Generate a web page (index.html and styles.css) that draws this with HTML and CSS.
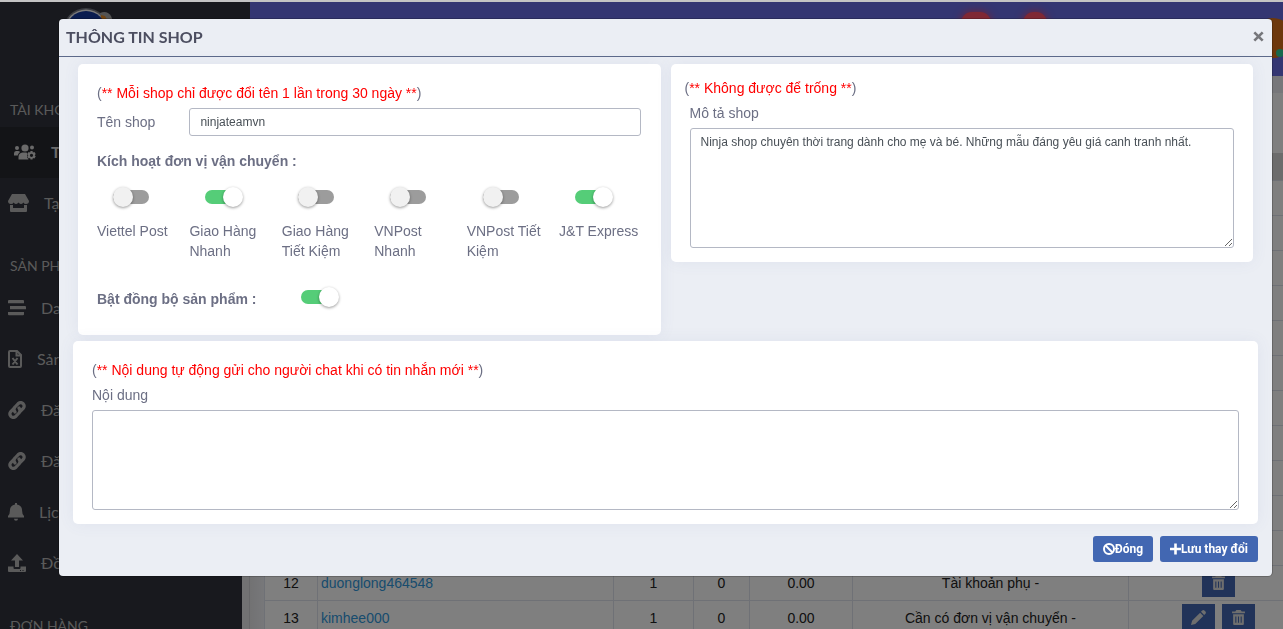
FILE: index.html
```html
<!DOCTYPE html>
<html lang="vi">
<head>
<meta charset="utf-8">
<title>Thông tin shop</title>
<link rel="stylesheet" href="styles.css">
</head>
<body>
<div class="page">
  <aside class="sidebar">
    <div class="brand">
      <svg width="60" height="60" viewBox="0 0 60 60" aria-hidden="true">
        <circle cx="26" cy="23" r="23" fill="#b9c0cc" opacity=".5"/>
        <circle cx="26" cy="23" r="21.500" fill="#f4f4f4"/>
        <path d="M40 5q7-3 11 3l3 8-12 2z" fill="#a8a8a8"/>
        <path d="M41 7l4 1 4 7-8-2z" fill="#e08a28"/>
        <circle cx="26" cy="23" r="20" fill="#1238a0"/>
      </svg>
    </div>
    <h2 class="side-title">TÀI KHOẢN</h2>
    <ul class="side-list">
      <li><a class="side-link active" href="#">
        <svg width="22" height="16" viewBox="0 0 22 16"><g fill="currentColor"><circle cx="3" cy="4" r="2"/><circle cx="11" cy="4" r="3.600"/><circle cx="18" cy="3.500" r="2"/><path d="M0 9.500Q0 7 2 7h2q1.500 0 2 1-2 1.500-2.300 3.500H0zM4.500 15.500V13q0-4 4-4.500h4l1 1.500-.5 3 1.500 2.500z"/><path fill-rule="evenodd" d="M16.500 7h2l.4 1.500 1.500-.4 1.300 2-1 1.200 1 1.200-1.300 2-1.500-.4-.4 1.500h-2l-.4-1.500-1.500.4-1.300-2 1-1.200-1-1.200 1.300-2 1.500.4zm1 2.700a1.500 1.500 0 100 3.200 1.500 1.500 0 000-3.200z"/></g></svg>
        <span>Tổng quan</span></a></li>
      <li><a class="side-link" href="#">
        <svg width="21" height="18" viewBox="0 0 21 18"><path fill="currentColor" d="M4 0h13l4 7q0 3-3 3-2 0-2.500-1.500Q14 10 13 10t-2.500-1.500Q9 10 8 10T5.500 8.500Q5 10 3 10 0 10 0 7zM2 11h3v3h11v-3h3v6q0 1-1 1H3q-1 0-1-1z"/></svg>
        <span>Tạo tài khoản</span></a></li>
    </ul>
    <h2 class="side-title">SẢN PHẨM</h2>
    <ul class="side-list">
      <li><a class="side-link" href="#">
        <svg width="18" height="16" viewBox="0 0 18 16"><path fill="currentColor" d="M1 0h14q1 0 1 1v2.300H0V1q0-1 1-1zM2 6h15q1 0 1 1v2.300H2V7zM0 12h16v2.300q0 1-1 1H1q-1 0-1-1z"/></svg>
        <span>Danh sách</span></a></li>
      <li><a class="side-link" href="#">
        <svg width="14" height="18" viewBox="0 0 14 18"><path fill="none" stroke="currentColor" stroke-width="2" d="M1 2q0-1 1-1h7l4 4v11q0 1-1 1H2q-1 0-1-1zM8.500 1v4.500H13M4.500 8l5 6.500M9.500 8l-5 6.500"/></svg>
        <span>Sản phẩm</span></a></li>
      <li><a class="side-link" href="#">
        <svg width="18" height="18" viewBox="0 0 18 18"><g fill="none" stroke="currentColor" stroke-width="3.200" stroke-linecap="round"><path d="M7 11q-2-3 0-5l3-3.200q2.500-2.300 5-.3 2.200 2.500.2 5L13 9.700"/><path d="M11 7q2 3 0 5l-3 3.200q-2.500 2.300-5 .3-2.200-2.500-.2-5L5 8.300"/></g></svg>
        <span>Đăng</span></a></li>
      <li><a class="side-link" href="#">
        <svg width="18" height="18" viewBox="0 0 18 18"><g fill="none" stroke="currentColor" stroke-width="3.200" stroke-linecap="round"><path d="M7 11q-2-3 0-5l3-3.200q2.500-2.300 5-.3 2.200 2.500.2 5L13 9.700"/><path d="M11 7q2 3 0 5l-3 3.200q-2.500 2.300-5 .3-2.200-2.500-.2-5L5 8.300"/></g></svg>
        <span>Đăng</span></a></li>
      <li><a class="side-link" href="#">
        <svg width="16" height="18" viewBox="0 0 16 18"><path fill="currentColor" d="M7 0h2v1.500q5 1 5 5.500 0 4 2 6v1.500H0V13q2-2 2-6 0-4.500 5-5.500zM6 15.700h4q0 2-2 2t-2-2z"/></svg>
        <span>Lịch</span></a></li>
      <li><a class="side-link" href="#">
        <svg width="18" height="18" viewBox="0 0 18 18"><path fill="currentColor" fill-rule="evenodd" d="M9 0l6 6.500h-4V13H7V6.500H3zM0 12.500h5.500V14q0 1 1 1h5q1 0 1-1v-1.500H18V17q0 1-1 1H1q-1 0-1-1zM12 16v1h1v-1zm2.500 0v1h1v-1z"/></svg>
        <span>Đồng bộ</span></a></li>
    </ul>
    <h2 class="side-title">ĐƠN HÀNG</h2>
  </aside>

  <div class="content">
    <header class="topbar">
      <span class="badge badge-wide"></span>
      <span class="badge badge-small"></span>
      <span class="avatar"></span>
      <span class="online"></span>
    </header>
    <div class="crumbs"></div>
    <main class="panel">
      <table class="shops">
        <colgroup><col class="c-no"><col class="c-name"><col class="c-a"><col class="c-b"><col class="c-c"><col class="c-note"><col class="c-act"></colgroup>
        <thead><tr><th colspan="7"></th></tr></thead>
        <tbody>
          <tr><td colspan="7"></td></tr><tr><td colspan="7"></td></tr><tr><td colspan="7"></td></tr>
          <tr><td colspan="7"></td></tr><tr><td colspan="7"></td></tr><tr><td colspan="7"></td></tr>
          <tr><td colspan="7"></td></tr><tr><td colspan="7"></td></tr><tr><td colspan="7"></td></tr>
          <tr><td colspan="7"></td></tr><tr><td colspan="7"></td></tr>
          <tr><td>12</td><td class="name"><a href="#">duonglong464548</a></td><td>1</td><td>0</td><td>0.00</td><td>Tài khoản phụ -</td>
            <td><div class="actions"><button class="tool" type="button" aria-label="Xóa"><svg width="13" height="15" viewBox="0 0 12 14"><path fill="currentColor" fill-rule="evenodd" d="M4 0h4l1 1.500h3V3H0V1.500h3zM1 4h10v9q0 1-1 1H2q-1 0-1-1zM3 6v6h1V6zm2.500 0v6h1V6zM8 6v6h1V6z"/></svg></button></div></td></tr>
          <tr><td>13</td><td class="name"><a href="#">kimhee000</a></td><td>1</td><td>0</td><td>0.00</td><td>Cần có đơn vị vận chuyển -</td>
            <td><div class="actions"><button class="tool" type="button" aria-label="Sửa"><svg width="15" height="15" viewBox="0 0 14 14"><path fill="currentColor" d="M10.500.5q1-.8 2 0l1 1q.8 1 0 2L12.300 4.700 9.300 1.700zM8.500 2.500l3 3L4 13l-4 1 1-4z"/></svg></button><button class="tool" type="button" aria-label="Xóa"><svg width="13" height="15" viewBox="0 0 12 14"><path fill="currentColor" fill-rule="evenodd" d="M4 0h4l1 1.500h3V3H0V1.500h3zM1 4h10v9q0 1-1 1H2q-1 0-1-1zM3 6v6h1V6zm2.500 0v6h1V6zM8 6v6h1V6z"/></svg></button></div></td></tr>
        </tbody>
      </table>
    </main>
  </div>
</div>

<div class="backdrop">
  <form class="modal" role="dialog" aria-labelledby="modal-title">
    <div class="modal-head">
      <h1 id="modal-title">THÔNG TIN SHOP</h1>
      <button class="close" type="button" aria-label="Close"><svg width="11" height="11" viewBox="0 0 10 10"><path d="M1.200 1.200l7.600 7.600M8.800 1.200L1.200 8.800" stroke="currentColor" stroke-width="2.400"/></svg></button>
    </div>
    <div class="modal-body">
      <div class="top-cards">
        <section class="card card-shop">
          <p class="note">(<span>** Mỗi shop chỉ được đổi tên 1 lần trong 30 ngày **</span>)</p>
          <div class="grid name-row">
            <label for="shop-name">Tên shop</label>
            <input id="shop-name" class="field" type="text" value="ninjateamvn">
          </div>
          <h3 class="sub">Kích hoạt đơn vị vận chuyển :</h3>
          <div class="grid carriers">
            <label><input class="switch" type="checkbox"><span>Viettel Post</span></label>
            <label><input class="switch" type="checkbox" checked><span>Giao Hàng Nhanh</span></label>
            <label><input class="switch" type="checkbox"><span>Giao Hàng Tiết Kiệm</span></label>
            <label><input class="switch" type="checkbox"><span>VNPost Nhanh</span></label>
            <label><input class="switch" type="checkbox"><span>VNPost Tiết Kiệm</span></label>
            <label><input class="switch" type="checkbox" checked><span>J&amp;T Express</span></label>
          </div>
          <div class="sync">
            <label for="sync">Bật đồng bộ sản phẩm :</label>
            <input id="sync" class="switch" type="checkbox" checked>
          </div>
        </section>
        <section class="card card-desc">
          <p class="note">(<span>** Không được để trống **</span>)</p>
          <div class="stack inset">
            <label for="desc">Mô tả shop</label>
            <textarea id="desc" class="field area-tall">Ninja shop chuyên thời trang dành cho mẹ và bé. Những mẫu đáng yêu giá canh tranh nhất.</textarea>
          </div>
        </section>
      </div>
      <section class="card card-reply">
        <p class="note">(<span>** Nội dung tự động gửi cho người chat khi có tin nhắn mới **</span>)</p>
        <div class="stack">
          <label for="reply">Nội dung</label>
          <textarea id="reply" class="field area-short"></textarea>
        </div>
      </section>
    </div>
    <div class="modal-foot">
      <button class="btn" type="button"><svg width="12" height="12" viewBox="0 0 12 12"><g fill="none" stroke="currentColor" stroke-width="2"><circle cx="6" cy="6" r="5"/><path d="M2.500 2.500l7 7"/></g></svg>Đóng</button>
      <button class="btn" type="button"><svg width="11" height="12" viewBox="0 0 11 12"><path d="M5.500 .5v11M0 6h11" stroke="currentColor" stroke-width="2.600"/></svg>Lưu thay đổi</button>
    </div>
  </form>
</div>
</body>
</html>
```
FILE: styles.css
```css
* { box-sizing: border-box; }

body {
  margin: 0;
  height: 100vh;
  overflow: hidden;
  color: #6c6f84;
  font: 14px/20px "Liberation Sans", Arial, sans-serif;
}

h1, h2, h3, p, ul { margin: 0; padding: 0; }
ul { list-style: none; }
button, input, textarea { font-family: inherit; margin: 0; }
svg { display: block; flex: none; }

/* Page behind the dialog */
.page {
  display: flex;
  height: 100%;
  overflow: hidden;
  padding-top: 2px;
}

.sidebar {
  position: relative;
  z-index: 1;
  flex: none;
  width: 242px;
  background: #30323c;
  color: #b5b5b5;
  font-family: Lato, "Noto Sans", sans-serif;
}

.brand {
  width: 250px;
  height: 71px;
  padding: 6px 0 0 60px;
  background: #30323c;
}

.side-title {
  height: 54px;
  padding: 27px 10px 7px;
  font-size: 14px;
  font-weight: 400;
  line-height: 20px;
}

.side-link {
  display: flex;
  align-items: center;
  gap: 15px;
  height: 51px;
  padding: 0 0 2px 8px;
  color: #b5b5b5;
  font-size: 16px;
  text-decoration: none;
  white-space: nowrap;
}

.side-link.active {
  padding-left: 14px;
  background: #26282e;
  color: #d4d4d4;
  font-weight: 700;
}

.content {
  flex: 1;
  min-width: 0;
  display: flex;
  flex-direction: column;
  background: #e4e4e6;
  overflow: hidden;
}

.topbar {
  position: relative;
  flex: none;
  height: 74px;
  background: #686ce4;
}

.badge {
  position: absolute;
  top: 10px;
  height: 22px;
  border-radius: 11px;
  background: #ff5068;
  box-shadow: 0 0 8px #f04060;
}
.badge-wide { right: 292px; width: 30px; }
.badge-small { right: 236px; width: 24px; }

.avatar {
  position: absolute;
  top: 16px;
  right: -10px;
  width: 40px;
  height: 40px;
  border-radius: 50%;
  background: #da7018;
}
.online {
  position: absolute;
  top: 47px;
  right: -1px;
  width: 8px;
  height: 8px;
  border-radius: 50%;
  background: #30d098;
}

.crumbs {
  flex: none;
  height: 17px;
  background: #eeeef4;
}

.panel {
  flex: 1;
  min-height: 0;
  margin-left: 7px;
  padding: 60px 0 0 14px;
  border-left: 1px solid #d0d0d4;
  background: linear-gradient(90deg, #e4e4e6, #f0f1f6 15px, #fff 15px);
}

.shops {
  table-layout: fixed;
  width: 1044px;
  border-collapse: collapse;
  background: #fff;
  color: #222;
}
.shops th { height: 27px; padding: 0; background: #d8d8d8; }
.shops td {
  height: 35px;
  padding: 0 3px;
  border: 1px solid #dee2ec;
  text-align: center;
}
.shops .name { text-align: left; }
.shops a { color: #3098dc; text-decoration: none; }
.c-no { width: 53px; }
.c-name { width: 296px; }
.c-a { width: 80px; }
.c-b { width: 56px; }
.c-c { width: 103px; }
.c-note { width: 276px; }
.c-act { width: 180px; }

.actions { display: flex; justify-content: center; gap: 7px; }
.tool {
  display: grid;
  place-items: center;
  width: 33px;
  height: 28px;
  padding: 0;
  border: 0;
  background: #4267b2;
  color: #dcdcdc;
}

/* Dialog */
.backdrop {
  position: fixed;
  z-index: 2;
  inset: 0;
  padding: 17px 11px 0 59px;
  border-top: 2px solid #c4c4c4;
  background: rgba(0, 0, 0, .5);
  background-clip: padding-box;
}

.modal {
  border-radius: 4px;
  background: #ebeef4;
  box-shadow: 0 0 0 1px rgba(0, 0, 0, .2);
}

.modal-head {
  display: flex;
  align-items: center;
  justify-content: space-between;
  height: 38px;
  padding: 0 8px 2px 7px;
  border-bottom: 1px solid #5d6a8a;
}
.modal-head h1 {
  color: #4c4e60;
  font: 700 16px/20px Lato, "Noto Sans", sans-serif;
}
.close {
  padding: 0;
  border: 0;
  background: none;
  color: #76777b;
}

.modal-body {
  display: flex;
  flex-direction: column;
  gap: 6px;
  padding: 7px 14px 0;
}
.top-cards {
  display: grid;
  grid-template-columns: 1fr 1fr;
  align-items: start;
  gap: 10px;
  padding: 0 5px;
}

.card {
  border-radius: 5px;
  background: #fff;
  box-shadow: 0 0 16px rgba(90, 100, 170, .08);
}
.card-shop { padding: 19px 19px 26px; }
.card-desc { padding: 14px; }
.card-reply { padding: 19px 19px 14px; }

.note span { color: #f00; }
.inset { padding: 0 5px; }
.stack {
  display: flex;
  flex-direction: column;
  gap: 5px;
  padding-top: 5px;
}

.grid {
  display: grid;
  grid-template-columns: repeat(6, 1fr);
  column-gap: 10px;
}
.name-row { align-items: center; margin-top: 5px; }
.name-row .field { grid-column: span 5; }

.field {
  width: 100%;
  border: 1px solid #b4b8c4;
  border-radius: 3px;
  background: #fff;
  color: #495057;
  font-size: 12px;
  line-height: 18px;
}
input.field { height: 28px; padding: 0 10px; }
textarea.field { display: block; padding: 4px 10px; resize: vertical; }
.area-tall { height: 120px; }
.area-short { height: 100px; }

.sub {
  margin-top: 15px;
  font-size: 14px;
  line-height: 20px;
}

.carriers { margin-top: 19px; }
.carriers label { display: flex; flex-direction: column; gap: 17px; }

.switch {
  appearance: none;
  position: relative;
  width: 36px;
  height: 14px;
  margin-left: 16px;
  border-radius: 7px;
  background: #9c9c9c;
}
.switch::before {
  content: "";
  position: absolute;
  top: -3px;
  left: 0;
  width: 20px;
  height: 20px;
  border-radius: 50%;
  background: #f1f1f1;
  box-shadow: 0 1px 3px rgba(0, 0, 0, .4);
}
.switch:checked { background: #55cd78; }
.switch:checked::before { left: 18px; background: #fff; }

.sync {
  display: flex;
  gap: 29px;
  margin-top: 28px;
  font-weight: 700;
}
.sync .switch { margin-top: 1px; }

.modal-foot {
  display: flex;
  justify-content: flex-end;
  gap: 7px;
  padding: 12px 14px 14px;
}
.btn {
  display: flex;
  align-items: center;
  height: 26px;
  padding: 0 10px;
  border: 0;
  border-radius: 3px;
  background: #4267b2;
  color: #fff;
  font: 700 12px/18px Roboto, "Liberation Sans", sans-serif;
}
```
